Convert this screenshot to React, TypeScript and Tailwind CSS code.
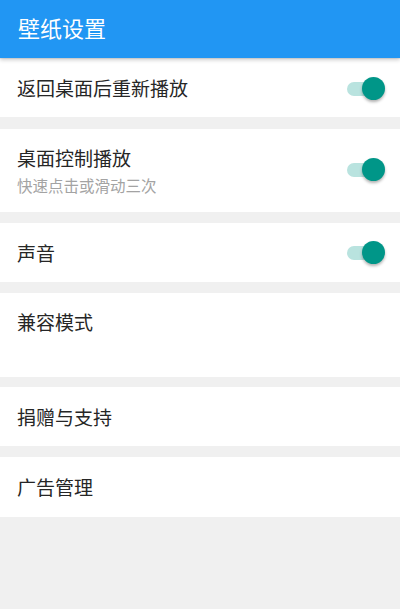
import React from "react";

const FONT = { fontFamily: '"Noto Sans CJK SC", "Noto Sans", sans-serif' };

function Toggle() {
  return (
    <div className="relative h-[23px] w-[38px] shrink-0">
      <div className="absolute left-0 top-[5px] h-[14px] w-[36px] rounded-full bg-[#b9e3df]" />
      <div className="absolute right-0 top-0 h-[23px] w-[23px] rounded-full bg-[#009688] shadow-[0_2px_3px_rgba(0,0,0,0.3)]" />
    </div>
  );
}

function Row({
  title,
  subtitle,
  toggle,
  tall,
  h,
}: {
  title: string;
  subtitle?: string;
  toggle?: boolean;
  tall?: boolean;
  h: string;
}) {
  if (tall) {
    return (
      <div className={`flex ${h} items-start bg-white pl-[17px] pr-[15px]`}>
        <div className="flex flex-1 flex-col pt-[16px]">
          <span className="text-[19px] leading-[26px] text-[#262626]">{title}</span>
          {subtitle && (
            <span className="mt-[1px] text-[15.5px] leading-[26px] text-[#a3a3a3]">{subtitle}</span>
          )}
        </div>
        {toggle && (
          <div className="pt-[29px]">
            <Toggle />
          </div>
        )}
      </div>
    );
  }
  return (
    <div className={`flex ${h} items-center bg-white pl-[17px] pr-[15px]`}>
      <span className="flex-1 text-[19px] leading-[26px] text-[#262626]">{title}</span>
      {toggle && <Toggle />}
    </div>
  );
}

export default function App() {
  return (
    <div className="flex h-[609px] w-[400px] flex-col bg-[#f0f0f0]" style={FONT}>
      <header className="relative z-10 flex h-[58px] shrink-0 items-center bg-[#2196f3] pb-[3px] pl-[18px] shadow-[0_2px_4px_rgba(0,0,0,0.2)]">
        <h1 className="text-[22px] font-normal text-white">壁纸设置</h1>
      </header>
      <div className="flex flex-col pt-[1px]">
        <Row h="h-[58px]" title="返回桌面后重新播放" toggle />
        <div className="h-[12px]" />
        <Row h="h-[83px]" title="桌面控制播放" subtitle="快速点击或滑动三次" toggle tall />
        <div className="h-[11px]" />
        <Row h="h-[59px]" title="声音" toggle />
        <div className="h-[11px]" />
        <Row h="h-[84px]" title="兼容模式" tall />
        <div className="h-[10px]" />
        <Row h="h-[59px]" title="捐赠与支持" />
        <div className="h-[11px]" />
        <Row h="h-[60px]" title="广告管理" />
      </div>
    </div>
  );
}
